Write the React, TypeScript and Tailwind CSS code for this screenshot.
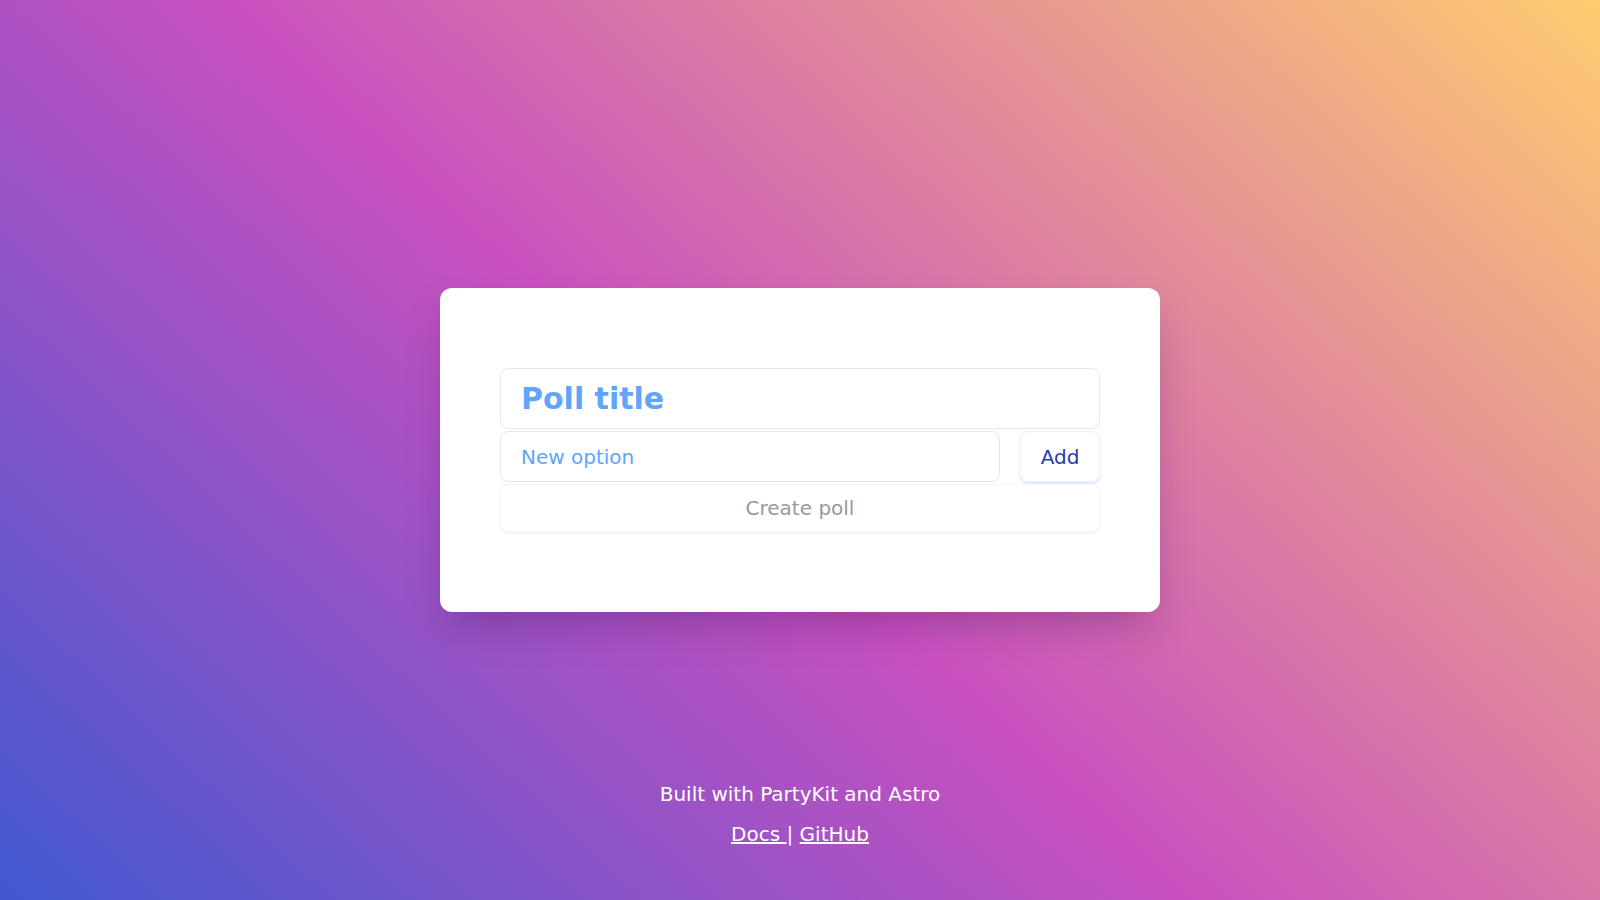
import { useState } from 'react';

// Poll creation page
export default function App() {
  const [title, setTitle] = useState('');
  const [option, setOption] = useState('');
  const [options, setOptions] = useState<string[]>([]);

  const addOption = () => {
    if (!option.trim()) return;
    setOptions([...options, option.trim()]);
    setOption('');
  };

  return (
    <div
      className="min-h-screen grid grid-rows-[1fr_auto_1fr] bg-[linear-gradient(43deg,#4158D0_0%,#C850C0_46%,#FFCC70_100%)]"
      style={{ fontFamily: '"DejaVu Sans", sans-serif' }}
    >
      <div />

      {/* Card */}
      <div className="flex justify-center">
        <div className="w-[720px] bg-white rounded-xl shadow-[0_20px_40px_-10px_rgba(60,20,90,0.35)] px-[60px] py-[80px]">
          <input
            value={title}
            onChange={(e) => setTitle(e.target.value)}
            placeholder="Poll title"
            className="w-full h-[61px] px-5 border border-[#e5e7eb] rounded-lg text-[30px] font-bold text-[#60a5fa] placeholder:text-[#60a5fa] outline-none"
          />
          <div className="flex gap-5 mt-[2px]">
            <input
              value={option}
              onChange={(e) => setOption(e.target.value)}
              placeholder="New option"
              className="flex-1 h-[51px] px-5 border border-[#e5e7eb] rounded-lg text-xl text-[#60a5fa] placeholder:text-[#60a5fa] outline-none"
            />
            <button
              onClick={addOption}
              className="w-[80px] h-[51px] rounded-lg border border-[#eef4ff] bg-white text-xl text-[#1e40af] shadow-[0_2px_3px_rgba(96,165,250,0.25)]"
            >
              Add
            </button>
          </div>
          {options.length > 0 && (
            <ul className="mt-1">
              {options.map((o, i) => (
                <li key={i} className="text-lg text-gray-700 px-5 py-1">
                  {o}
                </li>
              ))}
            </ul>
          )}
          <button className="w-full h-[48px] mt-[2px] rounded-lg border border-[#f5f5f5] bg-white text-xl text-[#999999] shadow-[0_2px_3px_rgba(0,0,0,0.05)]">
            Create poll
          </button>
        </div>
      </div>

      {/* Footer */}
      <div className="flex flex-col justify-end items-center pb-[46px] text-white text-xl">
        <p className="leading-[40px]">Built with PartyKit and Astro</p>
        <p className="leading-[40px]">
          <a href="#" className="underline">Docs </a>|{' '}
          <a href="#" className="underline">GitHub</a>
        </p>
      </div>
    </div>
  );
}
